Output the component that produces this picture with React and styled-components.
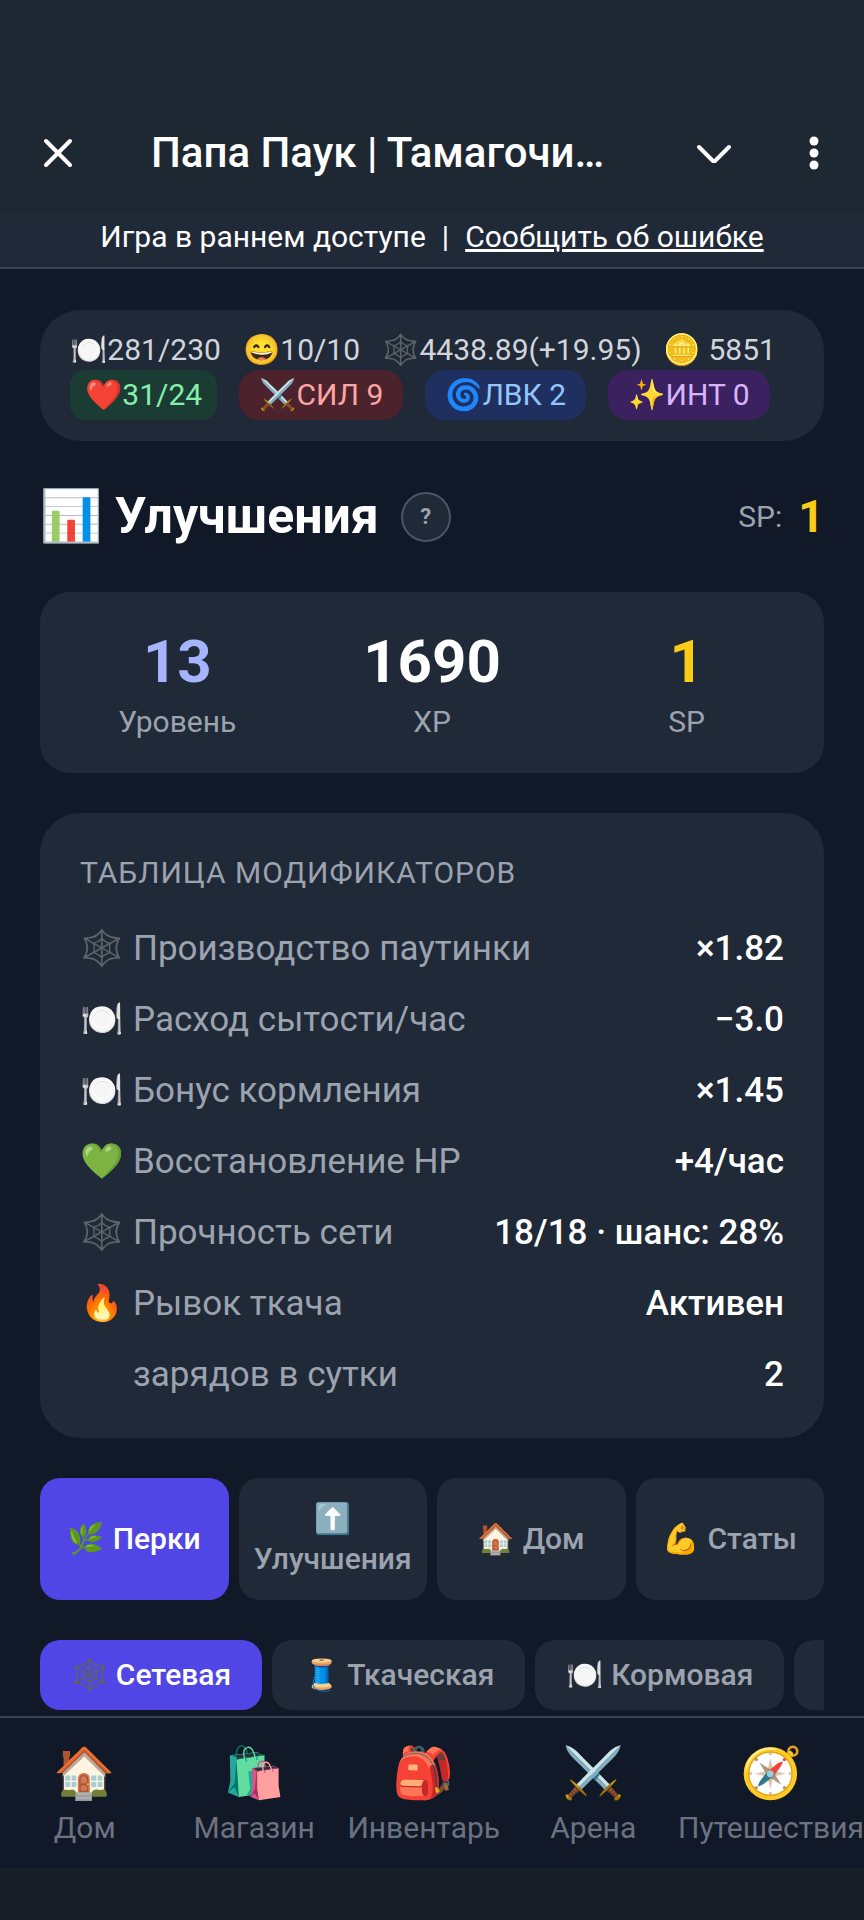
import styled, { createGlobalStyle } from "styled-components";

const stats = [
  { icon: "🍽️", text: "281/230" },
  { icon: "😄", text: "10/10" },
  { icon: "🕸️", text: "4438.89(+19.95)" },
  { icon: "🪙", text: " 5851" },
];

const attributes = [
  { icon: "❤️", text: "31/24", bg: "#1a3c33", color: "#86efac", compact: true },
  { icon: "⚔️", text: "СИЛ 9", bg: "#4c232c", color: "#fca5a5" },
  { icon: "🌀", text: "ЛВК 2", bg: "#1f3060", color: "#93c5fd" },
  { icon: "✨", text: "ИНТ 0", bg: "#3b2160", color: "#d8b4fe" },
];

const totals = [
  { value: "13", label: "Уровень", color: "#a5b4fc" },
  { value: "1690", label: "XP", color: "#ffffff" },
  { value: "1", label: "SP", color: "#facc15" },
];

const modifiers = [
  { icon: "🕸️", label: "Производство паутинки", value: "×1.82" },
  { icon: "🍽️", label: "Расход сытости/час", value: "−3.0" },
  { icon: "🍽️", label: "Бонус кормления", value: "×1.45" },
  { icon: "💚", label: "Восстановление HP", value: "+4/час" },
  { icon: "🕸️", label: "Прочность сети", value: "18/18 · шанс: 28%" },
  { icon: "🔥", label: "Рывок ткача", value: "Активен" },
  { icon: "", label: "зарядов в сутки", value: "2" },
];

const tabs = ["🌿 Перки", "⬆️ Улучшения", "🏠 Дом", "💪 Статы"];

const branches = ["🕸️ Сетевая", "🧵 Ткаческая", "🍽️ Кормовая"];

const links = [
  { icon: "🏠", label: "Дом" },
  { icon: "🛍️", label: "Магазин" },
  { icon: "🎒", label: "Инвентарь" },
  { icon: "⚔️", label: "Арена" },
  { icon: "🧭", label: "Путешествия" },
];

const App = () => {
  return (
    <>
      <GlobalStyle />
      <Page>
        <Header>
          <IconButton aria-label="Закрыть">
            <svg width="30" height="30" viewBox="0 0 30 30">
              <path d="M3 3L27 27M27 3L3 27" />
            </svg>
          </IconButton>
          <Title>Папа Паук | Тамагочи…</Title>
          <IconButton aria-label="Свернуть">
            <svg width="34" height="20" viewBox="0 0 34 20">
              <path d="M2 4L17 19L32 4" />
            </svg>
          </IconButton>
          <IconButton aria-label="Меню">
            <Dots width="10" height="34" viewBox="0 0 10 34">
              <circle cx="5" cy="5" r="4.5" />
              <circle cx="5" cy="17" r="4.5" />
              <circle cx="5" cy="29" r="4.5" />
            </Dots>
          </IconButton>
        </Header>

        <Notice>
          <span>Игра в раннем доступе</span>
          <span>|</span>
          <a href="#report">Сообщить об ошибке</a>
        </Notice>

        <Main>
          <StatusCard>
            <StatusRow>
              {stats.map((stat) => (
                <Stat key={stat.icon}>
                  {stat.icon}
                  {stat.text}
                </Stat>
              ))}
            </StatusRow>
            <StatusRow>
              {attributes.map((item) => (
                <Pill
                  key={item.icon}
                  $bg={item.bg}
                  $color={item.color}
                  $compact={item.compact}
                >
                  {item.icon}
                  {item.text}
                </Pill>
              ))}
            </StatusRow>
          </StatusCard>

          <Heading>
            <h1>📊 Улучшения</h1>
            <HelpButton aria-label="Справка">?</HelpButton>
            <Points>
              SP: <strong>1</strong>
            </Points>
          </Heading>

          <TotalsCard>
            {totals.map((item) => (
              <Total key={item.label} $color={item.color}>
                <strong>{item.value}</strong>
                <span>{item.label}</span>
              </Total>
            ))}
          </TotalsCard>

          <ModifiersCard>
            <h2>Таблица модификаторов</h2>
            <Table>
              <tbody>
                {modifiers.map((item) => (
                  <tr key={item.label}>
                    <IconCell>{item.icon}</IconCell>
                    <th scope="row">{item.label}</th>
                    <ValueCell>{item.value}</ValueCell>
                  </tr>
                ))}
              </tbody>
            </Table>
          </ModifiersCard>

          <Tabs>
            {tabs.map((tab, i) => (
              <Tab key={tab} $active={i === 0}>
                {tab}
              </Tab>
            ))}
          </Tabs>

          <Branches>
            {branches.map((branch, i) => (
              <Branch key={branch} $active={i === 0}>
                {branch}
              </Branch>
            ))}
            <Branch aria-label="Ещё" />
          </Branches>
        </Main>

        <Nav>
          {links.map((link) => (
            <NavLink href="#" key={link.label}>
              <NavIcon>{link.icon}</NavIcon>
              {link.label}
            </NavLink>
          ))}
        </Nav>
      </Page>
    </>
  );
};

export default App;

const GlobalStyle = createGlobalStyle`
  * {
    box-sizing: border-box;
  }

  body {
    margin: 0;
    background: #171e26;
    color: #ffffff;
    font-family: Roboto, "Noto Color Emoji", sans-serif;
    font-size: 30px;
    line-height: 40px;
  }

  h1, h2 {
    margin: 0;
  }

  button {
    border: none;
    padding: 0;
    font: inherit;
    color: inherit;
    background: none;
    cursor: pointer;
  }
`;

const Page = styled.div`
  background: #111827;
  overflow: hidden;
`;

const Header = styled.header`
  display: flex;
  align-items: center;
  padding: 93px 34px 0 34px;
  height: 213px;
  background: #1e2832;
`;

const IconButton = styled.button`
  display: flex;
  align-items: center;
  justify-content: center;
  width: 48px;
  height: 48px;

  svg {
    fill: none;
    stroke: #ffffff;
    stroke-width: 4;
    stroke-linecap: round;
    stroke-linejoin: round;
  }

  & + & {
    margin-left: 52px;
    margin-right: -8px;
  }
`;

const Dots = styled.svg`
  && {
    fill: #ffffff;
    stroke: none;
  }
`;

const Title = styled.div`
  flex: 1;
  margin-left: 69px;
  font-size: 42px;
  font-weight: 500;
  line-height: 50px;
  white-space: nowrap;
`;

const Notice = styled.div`
  display: flex;
  justify-content: center;
  gap: 16px;
  padding: 4px 20px 10px;
  background: #1f2937;
  border-bottom: 2px solid #374151;

  a {
    color: inherit;
    text-underline-offset: 2px;
  }
`;

const Main = styled.main`
  display: flex;
  flex-direction: column;
  gap: 40px;
  padding: 41px 40px 6px;
`;

const Card = styled.section`
  background: #1f2937;
  border-radius: 40px;
`;

const StatusCard = styled(Card)`
  padding: 20px 30px 21px;
`;

const StatusRow = styled.div`
  display: flex;
  gap: 22px;
  white-space: pre;
`;

const Stat = styled.span`
  color: #d1d5db;
`;

const Pill = styled.span`
  padding: 5px ${(props) => (props.$compact ? "15px" : "20px")};
  border-radius: ${(props) => (props.$compact ? "15px" : "20px")};
  background: ${(props) => props.$bg};
  color: ${(props) => props.$color};
`;

const Heading = styled.div`
  display: flex;
  align-items: center;

  h1 {
    font-size: 50px;
    font-weight: 700;
    line-height: 71px;
  }
`;

const HelpButton = styled.button`
  width: 50px;
  height: 50px;
  margin-left: 22px;
  border-radius: 50%;

  && {
    border: 2px solid #4b5563;
    background: #1f2937;
    color: #9ca3af;
    font-size: 22px;
    font-weight: 700;
  }
`;

const Points = styled.div`
  display: flex;
  align-items: center;
  gap: 16px;
  margin-left: auto;
  color: #9ca3af;

  strong {
    color: #facc15;
    font-size: 45px;
  }
`;

const TotalsCard = styled(Card)`
  display: grid;
  grid-template-columns: repeat(3, 1fr);
  gap: 20px;
  padding: 30px 20px 31px;
  border-radius: 30px;
`;

const Total = styled.div`
  display: flex;
  flex-direction: column;
  align-items: center;

  strong {
    color: ${(props) => props.$color};
    font-size: 60px;
    line-height: 80px;
  }

  span {
    color: #9ca3af;
  }
`;

const ModifiersCard = styled(Card)`
  padding: 40px 40px 28px;

  h2 {
    margin-bottom: 20px;
    color: #9ca3af;
    font-size: 30px;
    font-weight: 400;
    letter-spacing: 1px;
    text-transform: uppercase;
  }
`;

const Table = styled.table`
  display: block;
  font-size: 35px;
  line-height: 71px;

  tbody {
    display: block;
  }

  tr {
    display: flex;
  }

  td,
  th {
    padding: 0;
  }

  th {
    color: #9ca3af;
    font-weight: 400;
    text-align: left;
  }
`;

const IconCell = styled.td`
  width: 53px;
`;

const ValueCell = styled.td`
  flex: 1;
  font-weight: 500;
  text-align: right;
`;

const Tabs = styled.div`
  display: grid;
  grid-template-columns: repeat(4, 1fr);
  gap: 10px;
`;

const Tab = styled.button`
  && {
    padding: 21px 10px;
    border-radius: 20px;
    background: ${(props) => (props.$active ? "#4f46e5" : "#1f2937")};
    color: ${(props) => (props.$active ? "#ffffff" : "#9ca3af")};
    font-weight: 500;
  }
`;

const Branches = styled.div`
  display: flex;
  gap: 10px;
  overflow: hidden;
`;

const Branch = styled(Tab)`
  && {
    flex-shrink: 0;
    padding: 15px 31px;
  }
`;

const Nav = styled.nav`
  display: flex;
  padding: 20px 0;
  border-top: 2px solid #374151;
`;

const NavLink = styled.a`
  flex: 1;
  display: flex;
  flex-direction: column;
  align-items: center;
  color: #6b7280;
  text-decoration: none;
`;

const NavIcon = styled.span`
  font-size: 50px;
  line-height: 70px;
`;
